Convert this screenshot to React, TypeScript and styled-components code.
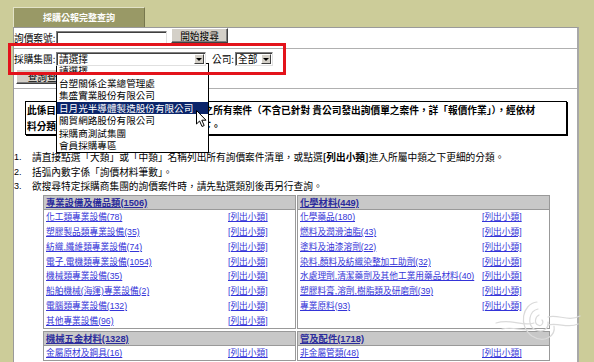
import React from "react";
import styled, { createGlobalStyle } from "styled-components";

const GlobalStyle = createGlobalStyle`
  html, body { margin: 0; padding: 0; background: #cccc99; }
  body { font-family: "Noto Sans CJK TC", "Noto Sans", sans-serif; }
  * { box-sizing: border-box; }
`;

const Page = styled.div`
  position: relative;
  width: 594px;
  height: 362px;
  overflow: hidden;
  background: #cccc99;
  padding: 7px 15px 0 13px;
`;

const Tab = styled.div`
  width: 132px;
  height: 20px;
  background: #999966;
  border-top: 1px solid #e2e2c6;
  border-left: 1px solid #e2e2c6;
  border-right: 1px solid #77774d;
  color: #fff;
  font-weight: 700;
  font-size: 9px;
  display: flex;
  align-items: center;
  justify-content: center;
`;

const Panel = styled.div`
  background: #fff;
  border-top: 1px solid #9a9a9a;
  border-left: 1px solid #9a9a9a;
  border-right: 2px solid #a8a8a8;
  height: 400px;
  font-size: 9.7px;
  color: #000;
`;

const SearchRow = styled.div`
  display: flex;
  align-items: flex-start;
  height: 21px;
  border-bottom: 1px solid #b0b0b0;
`;

const FieldLabel = styled.span<{ $w: number }>`
  width: ${(p) => p.$w}px;
  flex: none;
  line-height: 14px;
  white-space: nowrap;
`;

const TextInput = styled.div`
  width: 111px;
  height: 14px;
  margin-top: 3px;
  background: #fff;
  border-top: 1px solid #808080;
  border-left: 1px solid #808080;
  border-right: 1px solid #e0e0e0;
  border-bottom: 1px solid #e0e0e0;
  box-shadow: inset 1px 1px 0 #404040;
`;

const PushButton = styled.div<{ $w: number; $ml?: number }>`
  width: ${(p) => p.$w}px;
  height: 15px;
  margin-left: ${(p) => p.$ml ?? 0}px;
  background: #d4d0c8;
  border-top: 1px solid #fff;
  border-left: 1px solid #fff;
  border-right: 1px solid #404040;
  border-bottom: 1px solid #404040;
  box-shadow: inset -1px -1px 0 #808080;
  display: flex;
  align-items: center;
  justify-content: center;
  font-size: 9.7px;
  white-space: nowrap;
  overflow: hidden;
`;

const GroupSection = styled.div`
  height: 40px;
  padding-top: 3px;
  border-bottom: 1px solid #b0b0b0;
`;

const SelectLine = styled.div`
  display: flex;
  align-items: center;
  height: 14px;
`;

const ButtonLine = styled.div`
  display: flex;
  margin-top: 3px;
  padding-left: 2px;
`;

const SelectWrap = styled.div`
  position: relative;
`;

const SelectBox = styled.div<{ $w: number }>`
  position: relative;
  z-index: 3;
  width: ${(p) => p.$w}px;
  height: 14px;
  background: #fff;
  border-top: 1px solid #808080;
  border-left: 1px solid #808080;
  border-right: 1px solid #e0e0e0;
  border-bottom: 1px solid #e0e0e0;
  box-shadow: inset 1px 1px 0 #404040;
  display: flex;
  align-items: center;
  padding-left: 2px;
  line-height: 12px;
  font-size: 9.7px;
`;

const SelectText = styled.span`
  flex: 1;
  white-space: nowrap;
`;

const ArrowBtn = styled.span`
  width: 10px;
  height: 10px;
  margin-right: 1px;
  background: #d4d0c8;
  border-top: 1px solid #fff;
  border-left: 1px solid #fff;
  border-right: 1px solid #404040;
  border-bottom: 1px solid #404040;
  display: flex;
  align-items: center;
  justify-content: center;
  &::after {
    content: "";
    border-left: 3px solid transparent;
    border-right: 3px solid transparent;
    border-top: 3px solid #000;
  }
`;

const DropList = styled.div`
  position: absolute;
  z-index: 2;
  left: 0;
  top: 11px;
  width: 153px;
  background: #fff;
  border: 1px solid #000;
  font-size: 9.6px;
`;

const DropItem = styled.div<{ $active?: boolean }>`
  height: 12.5px;
  line-height: 12.5px;
  padding-left: 2px;
  white-space: nowrap;
  background: ${(p) => (p.$active ? "#0a246a" : "#fff")};
  color: ${(p) => (p.$active ? "#fff" : "#000")};
`;

const CompanyLabel = styled.span`
  margin-left: 6px;
  width: 23px;
  line-height: 14px;
`;

const InfoBox = styled.div`
  margin: 12px 10px 0 11px;
  border: 1px solid #000;
  box-shadow: 1px 1px 0 #000;
  padding: 0 1px;
  font-weight: 700;
  line-height: 16px;
  font-size: 9.7px;
  white-space: nowrap;
`;

const NoteList = styled.div`
  margin-top: 15px;
`;

const NoteItem = styled.div`
  display: flex;
  height: 14.5px;
  line-height: 14.5px;
  white-space: nowrap;
`;

const NoteNum = styled.span`
  width: 18px;
  flex: none;
  font-family: "Liberation Sans", sans-serif;
  font-size: 9px;
`;

const Strong = styled.b`
  font-weight: 700;
`;

const CatGrid = styled.div`
  margin: 1px 0 0 29px;
  width: 507px;
  display: grid;
  grid-template-columns: 253px 253px;
  column-gap: 1px;
  row-gap: 2px;
`;

const Card = styled.div`
  border: 1px solid #999;
  display: flex;
  flex-direction: column;
`;

const CardHeader = styled.div`
  height: 14px;
  background: #c8c8c8;
  border-bottom: 1px solid #999;
  padding-left: 2px;
  display: flex;
  align-items: center;
`;

const HeaderLink = styled.a`
  font-family: "Liberation Sans", "Noto Sans CJK TC", sans-serif;
  font-size: 9.3px;
  font-weight: 700;
  color: #2b2b9c;
  text-decoration: underline;
  white-space: nowrap;
`;

const CatRow = styled.div`
  display: grid;
  grid-template-columns: 182px auto;
  height: 14.75px;
  align-items: center;
  padding-left: 2px;
`;

const CatLink = styled.a`
  font-family: "Liberation Sans", "Noto Sans CJK TC", sans-serif;
  font-size: 8.7px;
  color: #3434d8;
  text-decoration: underline;
  white-space: nowrap;
`;

const RedMark = styled.div`
  position: absolute;
  z-index: 10;
  left: 8px;
  top: 43px;
  width: 278px;
  height: 32px;
  border: 3px solid #e3131b;
`;

const Cursor = styled.svg`
  position: absolute;
  z-index: 11;
  left: 196px;
  top: 110px;
`;

const Watermark = styled.svg`
  position: absolute;
  z-index: 5;
  left: 492px;
  top: 296px;
`;

type Cat = { title: string; items: string[] };

const cats: Cat[] = [
  {
    title: "專業設備及備品類(1506)",
    items: [
      "化工類專業設備(78)",
      "塑膠製品類專業設備(35)",
      "紡織,纖維類專業設備(74)",
      "電子,電機類專業設備(1054)",
      "機械類專業設備(35)",
      "船舶機械(海運)專業設備(2)",
      "電腦類專業設備(132)",
      "其他專業設備(96)",
    ],
  },
  {
    title: "化學材料(449)",
    items: [
      "化學藥品(180)",
      "燃料及潤滑油脂(43)",
      "塗料及油漆溶劑(22)",
      "染料,顏料及紡織染整加工助劑(32)",
      "水處理劑,清潔藥劑及其他工業用藥品材料(40)",
      "塑膠料膏,溶劑,樹脂類及研磨劑(39)",
      "專業原料(93)",
    ],
  },
  { title: "機械五金材料(1328)", items: ["金屬原材及鋼具(16)"] },
  { title: "管及配件(1718)", items: ["非金屬管類(48)"] },
];

const groups = [
  "請選擇",
  "台塑關係企業總管理處",
  "集盛實業股份有限公司",
  "日月光半導體製造股份有限公司",
  "關貿網路股份有限公司",
  "採購商測試集團",
  "會員採購專區",
];

export default function App() {
  return (
    <Page>
      <GlobalStyle />
      <Tab>採購公報完整查詢</Tab>
      <Panel>
        <SearchRow>
          <FieldLabel $w={42} style={{ marginTop: 3 }}>詢價案號:</FieldLabel>
          <TextInput />
          <PushButton $w={57} $ml={4}>開始搜尋</PushButton>
        </SearchRow>
        <GroupSection>
          <SelectLine>
            <FieldLabel $w={42}>採購集團:</FieldLabel>
            <SelectWrap>
              <SelectBox $w={150}>
                <SelectText>請選擇</SelectText>
                <ArrowBtn />
              </SelectBox>
              <DropList>
                {groups.map((g, i) => (
                  <DropItem key={g} $active={i === 3}>{g}</DropItem>
                ))}
              </DropList>
            </SelectWrap>
            <CompanyLabel>公司:</CompanyLabel>
            <SelectBox $w={38}>
              <SelectText>全部</SelectText>
              <ArrowBtn />
            </SelectBox>
          </SelectLine>
          <ButtonLine>
            <PushButton $w={62}>查詢查詢</PushButton>
          </ButtonLine>
        </GroupSection>
        <InfoBox>
          此係目前所有開放中且 貴公司可參與報價之所有案件（不含已針對 貴公司發出詢價單之案件，詳「報價作業」），經依材
          <br />
          料分類統計目前各類別之詢價案件數量如下。
        </InfoBox>
        <NoteList>
          <NoteItem>
            <NoteNum>1.</NoteNum>
            <span>
              請直接點選「大類」或「中類」名稱列出所有詢價案件清單，或點選<Strong>[列出小類]</Strong>進入所屬中類之下更細的分類。
            </span>
          </NoteItem>
          <NoteItem>
            <NoteNum>2.</NoteNum>
            <span>括弧內數字係「詢價材料筆數」。</span>
          </NoteItem>
          <NoteItem>
            <NoteNum>3.</NoteNum>
            <span>欲搜尋特定採購商集團的詢價案件時，請先點選類別後再另行查詢。</span>
          </NoteItem>
        </NoteList>
        <CatGrid>
          {cats.map((c) => (
            <Card key={c.title}>
              <CardHeader>
                <HeaderLink>{c.title}</HeaderLink>
              </CardHeader>
              {c.items.map((it) => (
                <CatRow key={it}>
                  <CatLink>{it}</CatLink>
                  <CatLink>[列出小類]</CatLink>
                </CatRow>
              ))}
            </Card>
          ))}
        </CatGrid>
      </Panel>
      <RedMark />
      <Cursor width="12" height="18" viewBox="0 0 12 18">
        <path d="M0.5 0.5 L0.5 14 L3.6 11 L6 16.5 L8.2 15.5 L5.8 10.2 L10 10.2 Z" fill="#fff" stroke="#000" strokeWidth="1" />
      </Cursor>
      <Watermark width="90" height="52" viewBox="0 0 90 52" fill="none">
        <g stroke="#dadada" strokeWidth="1.2" strokeLinecap="round">
          <path d="M4 27 C 20 22, 30 31, 42 27" />
          <path d="M10 33 C 22 30, 32 36, 42 33" />
          <path d="M56 21 C 66 18, 76 26, 88 20" />
          <path d="M56 29 C 66 26, 76 33, 86 28" />
          <path d="M45 6 C 30 8, 26 30, 40 40 C 52 48, 64 40, 62 30" />
          <path d="M46 13 C 37 15, 35 28, 42 33 C 50 38, 57 33, 56 26" />
          <path d="M47 19 C 43 21, 42 27, 46 29 C 50 31, 52 26, 50 24" />
        </g>
      </Watermark>
    </Page>
  );
}
